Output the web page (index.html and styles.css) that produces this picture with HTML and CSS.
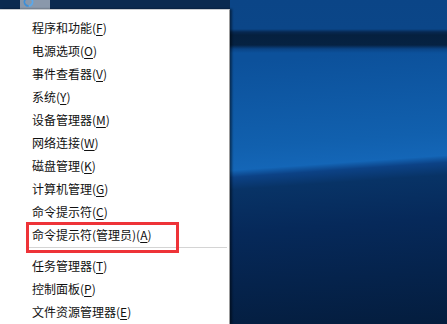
FILE: index.html
```html
<!DOCTYPE html>
<html lang="zh-CN">
<head>
<meta charset="utf-8">
<title>Win+X 菜单</title>
<link rel="stylesheet" href="styles.css">
</head>
<body>
<div class="screen">
  <div class="desk-top">
    <div class="desk-icon">
      <svg width="13" height="9" viewBox="0 0 13 9" aria-hidden="true">
        <path d="M2 0 A5 5 0 0 0 6.5 7 L6.5 5 A3 3 0 0 1 4 0 Z" fill="#3d8fd8"/>
        <path d="M11 0 A5 5 0 0 1 7 7 L7 5 A3 3 0 0 0 9 0 Z" fill="#5aa8ea"/>
      </svg>
    </div>
  </div>
  <div class="menu">
    <ul class="group">
      <li class="item">程序和功能(<u>F</u>)</li>
      <li class="item">电源选项(<u>O</u>)</li>
      <li class="item">事件查看器(<u>V</u>)</li>
      <li class="item">系统(<u>Y</u>)</li>
      <li class="item">设备管理器(<u>M</u>)</li>
      <li class="item">网络连接(<u>W</u>)</li>
      <li class="item">磁盘管理(<u>K</u>)</li>
      <li class="item">计算机管理(<u>G</u>)</li>
      <li class="item">命令提示符(<u>C</u>)</li>
      <li class="item marked">命令提示符(管理员)(<u>A</u>)</li>
    </ul>
    <div class="sep"></div>
    <ul class="group">
      <li class="item">任务管理器(<u>T</u>)</li>
      <li class="item">控制面板(<u>P</u>)</li>
      <li class="item">文件资源管理器(<u>E</u>)</li>
    </ul>
  </div>
</div>
</body>
</html>
```

FILE: styles.css
```css
* { box-sizing: border-box; }
html, body { margin: 0; padding: 0; }
body {
  width: 447px;
  height: 324px;
  overflow: hidden;
  font-family: "Noto Sans CJK SC", "Noto Sans", sans-serif;
  background:
    linear-gradient(to bottom, #0b4587 0, #0b4688 29px, #072851 32px, #05203f 35px, #062242 45px, #0a4486 49px, #0c519b 53px) top / 100% 54px no-repeat,
    linear-gradient(176deg, #0c519b 0%, #0c519b 22%, #1160ae 46%, #1466b7 52.5%, #0c4286 54.5%, #083366 58%, #06295a 70%, #041d3e 100%);
}
.screen {
  width: 447px;
  height: 324px;
  display: flex;
  flex-direction: column;
}
.desk-top {
  width: 230px;
  height: 9px;
  background: #0b2a50;
  display: flex;
  padding-left: 20px;
}
.desk-icon {
  width: 30px;
  height: 9px;
  background: #8a98ab;
  padding-left: 2px;
}
.desk-icon svg { display: block; }
.menu {
  flex: 1;
  width: 230px;
  background: #ffffff;
  border-top: 1px solid #c9ccd0;
  border-right: 1px solid #9b9b9b;
  box-shadow: 2px 0 2px rgba(0, 0, 0, 0.45);
  padding-top: 6px;
}
.group {
  list-style: none;
  margin: 0;
  padding: 0;
}
.item {
  height: 23px;
  line-height: 23px;
  padding-left: 32px;
  font-size: 12px;
  color: #111;
  white-space: nowrap;
}
.item u { text-underline-offset: 2px; }
.marked { position: relative; }
.marked::after {
  content: "";
  position: absolute;
  left: 26px;
  top: -1px;
  width: 147px;
  height: 25px;
  border: 3px solid #ee3338;
}
.sep {
  height: 1px;
  margin: 1px 2px 6px 26px;
  background: #d4d4d4;
}
```
